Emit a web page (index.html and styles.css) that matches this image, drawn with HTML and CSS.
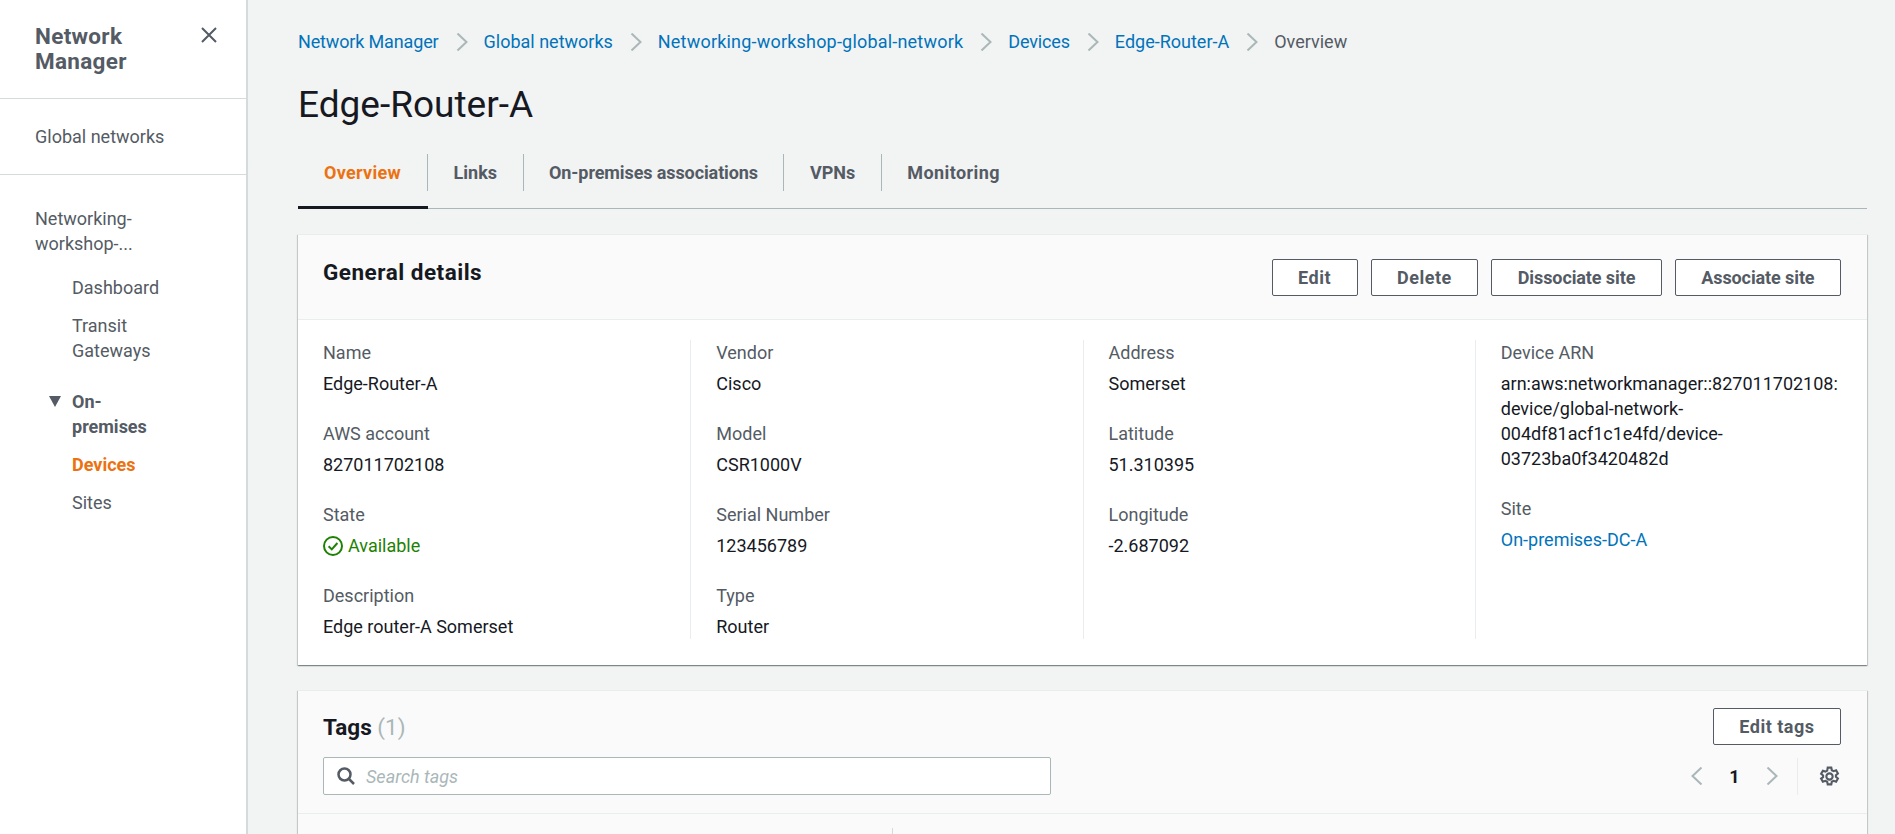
FILE: index.html
```html
<!DOCTYPE html>
<html lang="en">
<head>
  <meta charset="UTF-8" />
  <meta name="viewport" content="width=device-width, initial-scale=1" />
  <title>Edge-Router-A</title>
  <link rel="stylesheet" href="styles.css">
</head>
<body>
  <aside class="sidebar">
    <div class="sidebar-header">
      <h2>Network<br>Manager</h2>
      <svg class="close-icon" viewBox="0 0 18 18"><path d="M2 2l14 14M16 2L2 16" /></svg>
    </div>
    <div class="sidebar-section">
      <a href="#">Global networks</a>
    </div>
    <div class="sidebar-section last">
      <a href="#">Networking-<br>workshop-...</a>
      <ul class="side-list">
        <li><a href="#">Dashboard</a></li>
        <li><a href="#">Transit<br>Gateways</a></li>
        <li class="side-group">
          <span class="triangle"></span>
          <span>On-<br>premises</span>
        </li>
        <li><a href="#" class="current">Devices</a></li>
        <li><a href="#">Sites</a></li>
      </ul>
    </div>
  </aside>

  <main>
    <nav class="breadcrumbs">
      <a href="#" class="crumb-tight">Network Manager</a>
      <svg class="crumb-sep" viewBox="0 0 12 18"><path d="M1.5 .5l9 8.5-9 8.5" /></svg>
      <a href="#">Global networks</a>
      <svg class="crumb-sep" viewBox="0 0 12 18"><path d="M1.5 .5l9 8.5-9 8.5" /></svg>
      <a href="#" class="crumb-long">Networking-workshop-global-network</a>
      <svg class="crumb-sep" viewBox="0 0 12 18"><path d="M1.5 .5l9 8.5-9 8.5" /></svg>
      <a href="#" class="crumb-tight">Devices</a>
      <svg class="crumb-sep" viewBox="0 0 12 18"><path d="M1.5 .5l9 8.5-9 8.5" /></svg>
      <a href="#">Edge-Router-A</a>
      <svg class="crumb-sep" viewBox="0 0 12 18"><path d="M1.5 .5l9 8.5-9 8.5" /></svg>
      <span>Overview</span>
    </nav>

    <h1>Edge-Router-A</h1>

    <ul class="tabs">
      <li class="tab active"><span>Overview</span></li>
      <li class="tab"><span>Links</span></li>
      <li class="tab"><span class="tab-long">On-premises associations</span></li>
      <li class="tab"><span>VPNs</span></li>
      <li class="tab"><span class="no-line">Monitoring</span></li>
    </ul>

    <section class="card">
      <div class="card-header details-header">
        <h2>General details</h2>
        <div class="actions">
          <button class="short">Edit</button>
          <button class="short">Delete</button>
          <button>Dissociate site</button>
          <button>Associate site</button>
        </div>
      </div>
      <div class="details">
        <div class="col">
          <div class="field"><label>Name</label><div>Edge-Router-A</div></div>
          <div class="field"><label>AWS account</label><div>827011702108</div></div>
          <div class="field">
            <label>State</label>
            <div class="status">
              <svg viewBox="0 0 20 20"><circle cx="10" cy="10" r="9" /><path d="M5.6 10.2l3.2 3.2 5.6-6.4" /></svg>
              Available
            </div>
          </div>
          <div class="field"><label>Description</label><div>Edge router-A Somerset</div></div>
        </div>
        <div class="col">
          <div class="field"><label>Vendor</label><div>Cisco</div></div>
          <div class="field"><label>Model</label><div>CSR1000V</div></div>
          <div class="field"><label>Serial Number</label><div>123456789</div></div>
          <div class="field"><label>Type</label><div>Router</div></div>
        </div>
        <div class="col">
          <div class="field"><label>Address</label><div>Somerset</div></div>
          <div class="field"><label>Latitude</label><div>51.310395</div></div>
          <div class="field"><label>Longitude</label><div>-2.687092</div></div>
        </div>
        <div class="col">
          <div class="field">
            <label>Device ARN</label>
            <div>arn:aws:networkmanager::827011702108:<br>device/global-network-<br>004df81acf1c1e4fd/device-<br>03723ba0f3420482d</div>
          </div>
          <div class="field"><label>Site</label><div><a href="#">On-premises-DC-A</a></div></div>
        </div>
      </div>
    </section>

    <section class="card tags-card">
      <div class="card-header tags-header">
        <div class="tags-row">
          <h2>Tags <span class="count">(1)</span></h2>
          <button class="short">Edit tags</button>
        </div>
        <div class="tags-row">
          <div class="search">
            <svg viewBox="0 0 18 18"><circle cx="7.5" cy="7.5" r="6" /><path d="M12 12l5 5" /></svg>
            <input type="text" placeholder="Search tags">
          </div>
          <div class="pager">
            <svg class="pager-arrow" viewBox="0 0 12 18"><path d="M10.5 .5l-9 8.5 9 8.5" /></svg>
            <span class="page-num">1</span>
            <svg class="pager-arrow" viewBox="0 0 12 18"><path d="M1.5 .5l9 8.5-9 8.5" /></svg>
            <span class="pager-line"></span>
            <svg class="gear" viewBox="0 0 20 20">
              <circle cx="10" cy="10" r="3" />
              <path d="M8.3 1.5h3.4l.5 2.5 1.7.9 2.4-.8 1.7 3-1.9 1.6v1.6l1.9 1.6-1.7 3-2.4-.8-1.7.9-.5 2.5H8.3l-.5-2.5-1.7-.9-2.4.8-1.7-3L3.9 10.7V9.1L2 7.5l1.7-3 2.4.8 1.7-.9z" />
            </svg>
          </div>
        </div>
      </div>
      <div class="table-head"><span class="head-tick"></span></div>
    </section>
  </main>
</body>
</html>
```

FILE: styles.css
```css
* {
  box-sizing: border-box;
  margin: 0;
  padding: 0;
}

html, body {
  height: 834px;
  overflow: hidden;
}

body {
  display: flex;
  font-family: Roboto, 'Noto Sans', sans-serif;
  font-size: 18px;
  line-height: 25px;
  color: #16191f;
  background: #f2f3f3;
}

a {
  color: #0073bb;
  text-decoration: none;
}

ul {
  list-style: none;
}

/* sidebar */
.sidebar {
  flex: 0 0 248px;
  background: #fff;
  border-right: 2px solid #d5dbdb;
  color: #545b64;
}

.sidebar a {
  color: #545b64;
  display: block;
}

.sidebar-header {
  display: flex;
  justify-content: space-between;
  padding: 24px 28px 24px 35px;
  border-bottom: 1px solid #d5dbdb;
}

.sidebar-header h2 {
  font-size: 22.5px;
  line-height: 25px;
  font-weight: 700;
  letter-spacing: 0.3px;
}

.close-icon {
  width: 18px;
  height: 18px;
  margin-top: 2px;
  fill: none;
  stroke: #545b64;
  stroke-width: 2;
}

.sidebar-section {
  padding: 25px 35px 25px;
  border-bottom: 1px solid #d5dbdb;
}

.sidebar-section.last {
  padding-top: 31px;
  border-bottom: none;
}

.side-list {
  margin: 19px 0 0 37px;
}

.side-list li {
  margin-bottom: 13px;
}

.side-list .side-group {
  display: flex;
  gap: 11px;
  margin: 26px 0 13px -23px;
  font-weight: 700;
}

.triangle {
  width: 0;
  height: 0;
  margin-top: 7px;
  border-left: 6.5px solid transparent;
  border-right: 6.5px solid transparent;
  border-top: 11px solid #545b64;
}

.sidebar a.current {
  color: #ec7211;
  font-weight: 700;
}

/* main content */
main {
  flex: 1;
  min-width: 0;
  padding: 29px 28px 0 50px;
}

.breadcrumbs {
  display: flex;
  align-items: center;
  color: #545b64;
}

.crumb-long {
  letter-spacing: 0.2px;
}

.crumb-tight {
  letter-spacing: -0.15px;
}

.crumb-sep {
  width: 12px;
  height: 18px;
  margin: 0 16px 0 17px;
  fill: none;
  stroke: #aab7b8;
  stroke-width: 2;
}

h1 {
  margin-top: 29px;
  font-size: 37px;
  line-height: 44px;
  font-weight: 400;
}

.tabs {
  display: flex;
  margin-top: 27px;
  border-bottom: 1px solid #aab7b8;
}

.tab {
  padding-bottom: 15px;
  border-bottom: 3px solid transparent;
  margin-bottom: -1px;
  font-weight: 700;
  color: #545b64;
}

.tab span {
  display: block;
  height: 37px;
  padding: 0 25.5px;
  line-height: 38px;
  border-right: 1px solid #aab7b8;
}

.tab.active span {
  padding: 0 26px;
  letter-spacing: 0.3px;
}

.tab span.tab-long {
  letter-spacing: -0.1px;
}

.tab span.no-line {
  border-right: none;
  letter-spacing: 0.4px;
}

.tab.active {
  border-bottom-color: #16191f;
  color: #ec7211;
}

.card {
  margin-top: 25px;
  background: #fff;
  box-shadow: 0 1px 1px 0 rgba(0, 28, 36, 0.3), 1px 1px 1px 0 rgba(0, 28, 36, 0.15), -1px 1px 1px 0 rgba(0, 28, 36, 0.15);
  border-top: 1px solid #eaeded;
}

.card-header {
  background: #fafafa;
  border-bottom: 1px solid #eaeded;
}

.card h2 {
  margin-top: 1px;
  font-size: 22.5px;
  line-height: 25px;
  font-weight: 700;
}

.details-header {
  display: flex;
  justify-content: space-between;
  padding: 24px 26px 23px 25px;
}

.details-header h2 {
  letter-spacing: 0.5px;
}

.actions {
  display: flex;
  gap: 13px;
}

button {
  height: 37px;
  padding: 0 25.5px;
  background: #fff;
  border: 1px solid #545b64;
  border-radius: 2px;
  font: inherit;
  font-weight: 700;
  letter-spacing: -0.1px;
  color: #545b64;
}

button.short {
  letter-spacing: 0.5px;
}

.details {
  display: grid;
  grid-template-columns: repeat(4, 1fr);
  padding: 20px 0 26px;
}

.col {
  padding: 0 25px;
}

.col + .col {
  border-left: 1px solid #eaeded;
}

.field {
  margin-bottom: 25px;
}

.field:last-child {
  margin-bottom: 0;
}

.field label {
  display: block;
  margin-bottom: 6px;
  color: #545b64;
}

.status {
  display: flex;
  align-items: center;
  gap: 5px;
  color: #1d8102;
}

.status svg {
  width: 20px;
  height: 20px;
  fill: none;
  stroke: #1d8102;
  stroke-width: 2;
}

.tags-header {
  padding: 17px 26px 18px 25px;
}

.tags-row {
  display: flex;
  justify-content: space-between;
  align-items: center;
}

.tags-row + .tags-row {
  margin-top: 12px;
}

.count {
  font-weight: 400;
  color: #aab7b8;
}

.search {
  position: relative;
  width: 728px;
}

.search svg {
  position: absolute;
  left: 14px;
  top: 10px;
  width: 18px;
  height: 18px;
  fill: none;
  stroke: #545b64;
  stroke-width: 2.5;
}

.search input {
  display: block;
  width: 100%;
  height: 38px;
  padding-left: 42px;
  border: 1px solid #aab7b8;
  border-radius: 2px;
  font: inherit;
  color: #16191f;
}

.search input::placeholder {
  font-style: italic;
  color: #aab7b8;
}

.pager {
  display: flex;
  align-items: center;
  height: 37px;
}

.pager-arrow {
  width: 12px;
  height: 18px;
  fill: none;
  stroke: #aab7b8;
  stroke-width: 2;
}

.page-num {
  width: 63px;
  text-align: center;
  font-weight: 700;
}

.pager-line {
  width: 1px;
  height: 37px;
  margin: 0 21px 0 19px;
  background: #eaeded;
}

.gear {
  width: 21px;
  height: 21px;
  margin-right: 1px;
  fill: none;
  stroke: #545b64;
  stroke-width: 2;
}

.table-head {
  height: 20px;
  background: #fafafa;
  padding: 14px 0 0 594px;
}

.head-tick {
  display: block;
  width: 1px;
  height: 6px;
  background: #d5dbdb;
}
```
